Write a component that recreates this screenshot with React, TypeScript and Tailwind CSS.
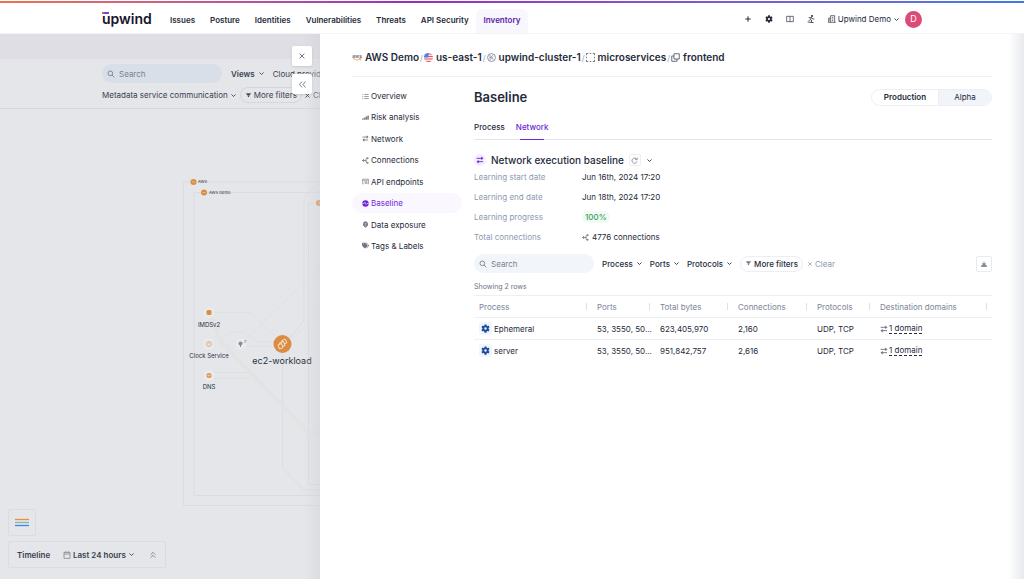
import React, { ReactNode } from "react";
import { FaTags } from "react-icons/fa";

const navItems = ["Issues", "Posture", "Identities", "Vulnerabilities", "Threats", "API Security"];

type IconProps = { className?: string };

function Stroke({ className = "size-2", children }: { className?: string; children: ReactNode }) {
  return (
    <svg viewBox="0 0 24 24" fill="none" stroke="currentColor" strokeWidth="2.4" className={`shrink-0 ${className}`} aria-hidden="true">
      {children}
    </svg>
  );
}

const Chevron = ({ className = "size-2" }: IconProps) => (
  <Stroke className={className}><path d="M5 8.500l7 7 7-7" strokeWidth="3" /></Stroke>
);
const Close = ({ className = "size-2" }: IconProps) => (
  <Stroke className={className}><path d="M5 5l14 14M19 5L5 19" strokeWidth="3" /></Stroke>
);
const Search = ({ className = "size-2" }: IconProps) => (
  <Stroke className={className}><circle cx="10" cy="10" r="7" /><path d="M15 15l7 7" /></Stroke>
);
const Funnel = ({ className = "size-2" }: IconProps) => (
  <Stroke className={className}><path d="M4 5h16l-4 5H8zM9 12h6l-2 5h-2z" fill="currentColor" strokeWidth="1" /></Stroke>
);
const Gear = ({ className = "size-2" }: IconProps) => (
  <Stroke className={className}>
    <path d="M12 1v5M12 18v5M2.500 6.500l4.300 2.500M17.200 15l4.300 2.500M2.500 17.500l4.300-2.500M17.200 9l4.300-2.500" strokeWidth="5.500" />
    <circle cx="12" cy="12" r="5.800" strokeWidth="5" />
  </Stroke>
);
const Swap = ({ className = "size-2" }: IconProps) => (
  <Stroke className={className}><path d="M2 7h17M3 17h18" strokeWidth="2.8" /><path d="M16 2l6 5-6 5zM8 12l-6 5 6 5z" fill="currentColor" strokeWidth="0.5" /></Stroke>
);
const Fork = ({ className = "size-2" }: IconProps) => (
  <Stroke className={className}><path d="M1 12h13M7 7l-5 5 5 5M20 4h-3q-3 0-3 3v10q0 3 3 3h3" strokeWidth="2.8" /><path d="M18 1l5 3-5 3zM18 17l5 3-5 3z" fill="currentColor" strokeWidth="1" /></Stroke>
);
const Boxes = ({ className = "size-2" }: IconProps) => (
  <Stroke className={className}><path d="M8 2h14v14H8zM8 8H2v14h14v-6" /></Stroke>
);
const Overview = () => (
  <Stroke><path d="M1 5h3M8 5h15M1 12h3M8 12h15M1 19h3M8 19h15" /></Stroke>
);
const Risk = () => (
  <Stroke><path d="M1 19v-3h4v3zM7 19v-6h4v6zM13 19V9h4v10zM19 19V6h4v13z" fill="currentColor" strokeWidth="1" /></Stroke>
);
const Endpoint = () => (
  <Stroke><path d="M6 20H2V4h20v16h-2M2 8h20" strokeWidth="2" /><path d="M9 13h8v7M17 20l-6-6M9 13l3 7" strokeWidth="2" /></Stroke>
);
const Baseline = () => (
  <Stroke><circle cx="12" cy="12" r="11" fill="currentColor" stroke="none" /><path d="M1 12h6l3-4 4 7 3-3h6" stroke="#faf7ff" strokeWidth="2" /></Stroke>
);
const Exposure = () => (
  <Stroke><path d="M12 1a10 10 0 00-5 18l5 4 5-4a10 10 0 00-5-18z" fill="currentColor" stroke="none" /><path d="M4 9h16M5 14h14M12 4v16" stroke="#fff" strokeWidth="0.8" /></Stroke>
);

const menu: { label: string; icon: ReactNode }[] = [
  { label: "Overview", icon: <Overview /> },
  { label: "Risk analysis", icon: <Risk /> },
  { label: "Network", icon: <Swap /> },
  { label: "Connections", icon: <Fork /> },
  { label: "API endpoints", icon: <Endpoint /> },
  { label: "Baseline", icon: <Baseline /> },
  { label: "Data exposure", icon: <Exposure /> },
  { label: "Tags & Labels", icon: <FaTags /> },
];

const columns = [
  { label: "Process", width: "" },
  { label: "Ports", width: "w-[63px]" },
  { label: "Total bytes", width: "w-[78px]" },
  { label: "Connections", width: "w-[79px]" },
  { label: "Protocols", width: "w-[63px]" },
  { label: "Destination domains", width: "w-[117px]" },
];

const rows = [
  { process: "Ephemeral", bytes: "623,405,970", connections: "2,160" },
  { process: "server", bytes: "951,842,757", connections: "2,616" },
];

function Logo() {
  return (
    <a href="#home" aria-label="upwind" className="flex w-12 flex-col text-[14px] leading-[14px] font-semibold text-[#17142b]">
      <span className="h-[2px] w-[7px] bg-linear-to-r from-[#f0605a] via-[#7a35d8] to-[#4a5cf0]" />
      <span className="-mt-[2px]">upwind</span>
    </a>
  );
}

function Header() {
  return (
    <header className="flex h-[34px] shrink-0 flex-col border-b border-[#f3f3f6] bg-white pt-px">
      <div className="h-[2px] shrink-0 bg-linear-to-r from-[#f0704a] via-[#9a2bc0] via-40% to-[#3f7ae8]" />
      <div className="flex flex-1 items-stretch pr-[102px] pl-[102px]">
        <div className="flex items-center pt-[2px]"><Logo /></div>
        <nav className="flex flex-1 items-stretch gap-[15px] pl-5 text-[8px] font-semibold text-[#262b3b]">
          {navItems.map((n) => (
            <a key={n} href="#nav" className="flex items-center pt-1 whitespace-nowrap">{n}</a>
          ))}
          <a href="#inventory" className="-ml-2 mt-[6px] flex items-center rounded-t-md bg-[#f9f7fe] px-2 pb-[2px] text-[#5b21a6]">
            Inventory
          </a>
        </nav>
        <div className="flex items-center gap-[13px] pt-[2px] text-[#262b3b]">
          <button aria-label="Add"><Stroke className="size-2"><path d="M12 4v16M4 12h16" strokeWidth="3" /></Stroke></button>
          <button aria-label="Settings"><Gear className="size-2" /></button>
          <button aria-label="Docs"><Stroke className="size-2"><path d="M2 4h20v16H2zM12 4v16" strokeWidth="2" /></Stroke></button>
          <button aria-label="What's new">
            <Stroke className="size-2"><circle cx="15" cy="3" r="2" fill="currentColor" /><path d="M5 8h8l5 4h4M13 8l-3 6 5 3-3 5M9 14l-4 4M2 21l18 2" /></Stroke>
          </button>
          <button className="flex items-center gap-[2px] text-[8px] whitespace-nowrap">
            <Stroke className="size-2"><path d="M2 22V9h6M8 22V2h12v20M1 22h22M12 7h4M12 12h4M12 17h4M4 13h2M4 17h2" strokeWidth="2" /></Stroke>
            Upwind Demo
            <Chevron className="size-[7px]" />
          </button>
          <span className="-ml-2 flex size-[17px] items-center justify-center rounded-full bg-[#dc4a78] text-[9px] text-white">D</span>
        </div>
      </div>
    </header>
  );
}

function Graph() {
  return (
    <div className="relative flex-1 overflow-hidden">
      <svg width="320" height="470" viewBox="0 109 320 470" fill="none" className="absolute top-0 left-0" aria-hidden="true">
        <g stroke="#dadce0">
          <path d="M330 182H183.500V505.500H330M330 192.500H194V495.500H330M330 203H308.500V484.500H330" />
          <path d="M209 312.500H250L275 336M209 372.500H250M209 378.500H250M222 344C224 330 232 332 244 332L258 342H275M244 346H275" stroke="#dfe0e1" />
          <path d="M330 172L304 198V320L290 338M282.500 352V468L304 490H330" stroke="#dadde5" />
          <path d="M247 338L330 257M294 337L330 300" stroke="#dfe1e1" />
        </g>
        <path d="M210 316C217 330 219 342 225 346L306 430Q312 436 325 436" stroke="#e2e4e3" strokeWidth="4" />
        <g fill="#eaebed"><circle cx="209" cy="312.500" r="5.500" /><circle cx="209" cy="344" r="5.500" /><circle cx="209" cy="375.500" r="5.500" /><circle cx="241" cy="344" r="5.500" /></g>
        <g fill="#dc8c42">
          <circle cx="193.500" cy="182" r="3" /><circle cx="204" cy="192.500" r="3" /><circle cx="319" cy="203" r="3" />
          <rect x="206.500" y="310" width="5" height="5" rx="1.500" /><circle cx="209" cy="375.500" r="2.500" /><circle cx="282.500" cy="344" r="9" />
        </g>
        <g stroke="#f1cfa8" strokeWidth=".7"><path d="M192 182h3M202.500 192.500h3M318 203h3M207 375.500h4M209 373.500v4" /></g>
        <circle cx="209" cy="344" r="2.500" stroke="#dfa169" strokeWidth=".8" /><path d="M209 342.500v2" stroke="#dfa169" strokeWidth=".8" />
        <circle cx="240.500" cy="343.500" r="2" fill="#858b97" /><path d="M240.500 345v2" stroke="#858b97" />
        <g stroke="#fbeedd" strokeWidth=".9" fill="#dc8c42"><path d="M281.500 341l3.500-2 2 3.500-3.500 2z" /><path d="M279.500 343l4-1.500 1.500 4-4 1.500z" /><path d="M278 345l3.500-1.500 1.500 4-3.500 1.500z" /></g>
      </svg>
      <div className="text-[#2b3140]">
        <span className="absolute top-[70px] left-[198px] text-[4px] leading-[6px]">AWS</span>
        <span className="absolute top-[81px] left-[209px] text-[4px] leading-[6px]">AWS Demo</span>
        <span className="absolute top-[212px] left-[209px] -translate-x-1/2 text-[6px] leading-2">IMDSv2</span>
        <span className="absolute top-[243px] left-[209px] -translate-x-1/2 text-[6px] leading-2 whitespace-nowrap">Clock Service</span>
        <span className="absolute top-[274px] left-[209px] -translate-x-1/2 text-[6px] leading-2">DNS</span>
        <span className="absolute top-[230px] left-[244px] text-[4px] leading-[6px]">7</span>
        <span className="absolute top-[247px] left-[282px] -translate-x-1/2 text-[9px] leading-[10px] whitespace-nowrap">ec2-workload</span>
      </div>
      <div className="absolute bottom-[11px] left-2 flex flex-col items-start gap-[5px] text-[8px] font-semibold text-[#3a4150]">
        <button aria-label="Legend" className="flex h-[27px] w-7 items-center justify-center rounded-xs border border-[#dadce0]">
          <svg viewBox="0 0 14 9" className="h-[9px] w-[14px]" strokeWidth="1.300" fill="none" aria-hidden="true">
            <path d="M0 1.500h14" stroke="#f08a3c" />
            <path d="M0 4.500h14" stroke="#74c2a4" />
            <path d="M0 7.500h14" stroke="#3f82f5" />
          </svg>
        </button>
        <div className="flex h-[27px] items-center rounded-xs border border-[#dadce0] px-2">
          <span className="w-[46px]">Timeline</span>
          <button className="flex items-center gap-[2px] whitespace-nowrap">
            <Stroke className="size-2 text-[#6c7382]"><path d="M3 4h18v18H3zM3 9h18M8 1v4M16 1v4" strokeWidth="2" /></Stroke>
            Last 24 hours
            <Chevron className="size-[7px]" />
          </button>
          <button aria-label="Expand timeline" className="ml-[14px] text-[#6c7382]">
            <Stroke><path d="M5 11l7-7 7 7M5 20l7-7 7 7" /></Stroke>
          </button>
        </div>
      </div>
    </div>
  );
}

function Backdrop() {
  return (
    <section className="relative flex w-80 shrink-0 flex-col bg-[#e4e6e9] text-[8px] text-[#3a4150]">
      <div className="h-[25px] bg-[#dfdee4]" />
      <div className="flex h-[50px] flex-col justify-between overflow-hidden border-b border-[#d5d7db] pt-[5px] pb-[5px] pl-[102px]">
        <div className="flex items-center whitespace-nowrap">
          <label className="flex h-[19px] w-[120px] shrink-0 items-center gap-1 rounded-full bg-[#d9dfe8] px-[5px] text-[#6c7382]">
            <Search />
            <input aria-label="Search inventory" placeholder="Search" className="w-full min-w-0 bg-transparent outline-none placeholder:text-[#7b8290]" />
          </label>
          <button className="ml-[9px] flex items-center gap-[3px] font-semibold">Views <Chevron className="size-[7px]" /></button>
          <button className="ml-2">Cloud provider</button>
        </div>
        <div className="flex items-center whitespace-nowrap">
          <button className="flex items-center gap-[2px]">Metadata service communication <Chevron className="size-[7px]" /></button>
          <button className="ml-[3px] flex h-4 items-center gap-[2px] rounded-full border border-[#d3d6da] px-1"><Funnel className="size-[7px]" />More filters</button>
          <button className="ml-[2px] flex items-center gap-[2px]"><Close className="size-[7px]" />Clear</button>
        </div>
      </div>
      <Graph />
      <div className="absolute inset-y-0 right-0 w-4 bg-linear-to-r from-transparent to-[#d0d2d9]/50" />
      <div className="absolute top-3 right-2 flex flex-col gap-2 text-[#6c7382]">
        <button aria-label="Close panel" className="flex size-5 items-center justify-center rounded-xs bg-white shadow-sm"><Close /></button>
        <button aria-label="Expand panel" className="flex size-5 items-center justify-center rounded-xs bg-white shadow-sm">
          <Stroke className="size-[9px]"><path d="M11 4l-7 8 7 8M20 4l-7 8 7 8" /></Stroke>
        </button>
      </div>
    </section>
  );
}

function Breadcrumbs() {
  const slash = <span className="px-px text-[8px] font-normal text-[#9aa1af]">/</span>;
  return (
    <nav aria-label="Breadcrumb" className="flex h-[43px] items-center border-b border-[#eff0f3] pt-[5px] text-[10px] font-semibold whitespace-nowrap text-[#262b3b]">
      <a href="#aws" className="flex items-center gap-[3px]">
        <span className="flex w-[10px] flex-col items-center text-[5px] leading-[4px] font-medium text-[#555c6b]">
          aws
          <svg viewBox="0 0 20 6" className="h-[3px] w-[10px]" fill="none" aria-hidden="true"><path d="M2 1q8 6 15 1M14 1h4l-1 4" stroke="#f0a04b" strokeWidth="1.600" /></svg>
        </span>
        AWS Demo
      </a>
      {slash}
      <a href="#region" className="flex items-center gap-[3px]">
        <svg viewBox="0 0 18 18" className="size-[9px]" aria-hidden="true">
          <clipPath id="flag"><circle cx="9" cy="9" r="9" /></clipPath>
          <g clipPath="url(#flag)"><path fill="#fbe9ec" d="M0 0h18v18H0z" /><path stroke="#e8505b" strokeWidth="2.400" d="M0 2h18M0 7h18M0 12h18M0 17h18" /><path fill="#4d82e0" d="M0 0h9v9H0z" /></g>
        </svg>
        us-east-1
      </a>
      {slash}
      <a href="#cluster" className="flex items-center gap-[3px]">
        <Stroke className="size-[9px] text-[#6c7382]"><circle cx="12" cy="12" r="10.500" strokeWidth="2" /><path d="M8 5v14M8 13l8-7M10 11l7 7M16 10l-4 5" strokeWidth="1.800" /></Stroke>
        upwind-cluster-1
      </a>
      {slash}
      <a href="#namespace" className="flex items-center gap-[3px]">
        <Stroke className="size-[9px] text-[#555c6b]"><path d="M1 6V1h5M10 1h4M18 1h5v5M23 10v4M23 18v5h-5M14 23h-4M6 23H1v-5M1 14v-4" /></Stroke>
        microservices
      </a>
      {slash}
      <a href="#frontend" className="flex items-center gap-[3px]">
        <Boxes className="size-[9px] text-[#555c6b]" />
        frontend
      </a>
    </nav>
  );
}

function Detail({ label, children }: { label: string; children: ReactNode }) {
  return (
    <div className="flex h-5 items-center">
      <dt className="w-[108px] text-[#8e99af]">{label}</dt>
      <dd className="flex items-center gap-[3px] text-[#262b3b]">{children}</dd>
    </div>
  );
}

function BaselinePanel() {
  return (
    <main className="min-w-0 flex-1 text-[8px] text-[#262b3b]">
      <div className="flex h-10 items-center justify-between">
        <h1 className="pt-px text-[13px] font-semibold">Baseline</h1>
        <div className="flex h-[17px] overflow-hidden rounded-full border border-[#eceef3]">
          <button className="w-[66px] font-semibold">Production</button>
          <button className="w-[53px] border-l border-[#eceef3] bg-[#f1f4f9]">Alpha</button>
        </div>
      </div>
      <div role="tablist" className="flex h-[23px] gap-[11px] border-b border-[#e4e4ef] font-medium">
        <button role="tab" aria-selected="false" className="flex h-6 items-start pt-1">Process</button>
        <button role="tab" aria-selected="true" className="flex h-[23px] flex-col items-center justify-between pt-1 text-[#6d28d9]">
          Network
          <span className="h-px w-6 shrink-0 bg-[#6d28d9]" />
        </button>
      </div>
      <div className="flex h-[27px] items-end gap-[5px] pb-px">
        <span className="flex size-3 items-center justify-center rounded-full bg-[#f3edfd] text-[#6d28d9]"><Swap /></span>
        <h2 className="text-[10px] leading-3 font-medium">Network execution baseline</h2>
        <button aria-label="Refresh" className="flex size-3 items-center justify-center rounded-xs border border-[#eceef3] text-[#6c7382]">
          <Stroke className="size-[7px]"><path d="M20 8a9 9 0 10 1 7M21 2v7h-7" /></Stroke>
        </button>
        <button aria-label="Collapse section" className="flex h-3 items-center"><Chevron className="size-[7px]" /></button>
      </div>
      <dl>
        <Detail label="Learning start date">Jun 16th, 2024 17:20</Detail>
        <Detail label="Learning end date">Jun 18th, 2024 17:20</Detail>
        <Detail label="Learning progress"><span className="rounded-full bg-[#f0fbf4] px-[3px] font-medium text-[#3a9e5c]">100%</span></Detail>
        <Detail label="Total connections"><Fork className="size-[7px] text-[#6c7382]" />4776 connections</Detail>
      </dl>
      <div className="mt-[7px] flex items-center font-medium">
        <label className="flex h-[19px] w-[120px] shrink-0 items-center gap-1 rounded-full bg-[#f2f5fa] px-[5px] text-[#6c7382]">
          <Search />
          <input aria-label="Search processes" placeholder="Search" className="w-full min-w-0 bg-transparent font-normal outline-none placeholder:text-[#7b8290]" />
        </label>
        <div className="flex flex-1 items-center gap-[7px] pl-2">
          {["Process", "Ports", "Protocols"].map((f) => (
            <button key={f} className="flex items-center gap-[3px]">{f}<Chevron className="size-[7px]" /></button>
          ))}
          <button className="flex h-4 items-center gap-[2px] rounded-full border border-[#eceef3] px-1"><Funnel className="size-[7px] text-[#6c7382]" />More filters</button>
          <button className="-ml-[3px] flex items-center gap-[2px] font-normal text-[#8e99af]"><Close className="size-[6px]" />Clear</button>
        </div>
        <button aria-label="Download" className="flex size-4 items-center justify-center rounded-xs border border-[#e8eaef] text-[#6c7382]">
          <Stroke className="size-[6px]"><path d="M12 2v10M5 11l7 6 7-6zM2 18h20v4H2z" fill="currentColor" /></Stroke>
        </button>
      </div>
      <p className="pt-[9px] pb-[3px] text-[7px] leading-[10px] text-[#6c7382]">Showing 2 rows</p>
      <table className="w-full table-fixed border-collapse text-left">
        <thead>
          <tr className="h-[22px] border-t border-b border-[#edeff2] text-[#7b8498]">
            {columns.map((c) => (
              <th key={c.label} scope="col" className={`px-[5px] font-normal ${c.width}`}>
                <span className="flex items-center justify-between whitespace-nowrap">{c.label}<span className="h-[7px] w-px bg-[#dde0e6]" /></span>
              </th>
            ))}
          </tr>
        </thead>
        <tbody>
          {rows.map((r) => (
            <tr key={r.process} className="h-[22px] border-b border-[#edeff2] last:border-0">
              <td className="px-[5px]">
                <span className="flex items-center gap-[2px]">
                  <span className="flex size-[13px] items-center justify-center rounded-xs bg-[#f1f5fc]"><Gear className="size-[9px] text-[#1e4a9c]" /></span>
                  {r.process}
                </span>
              </td>
              <td className="px-[5px] whitespace-nowrap">53, 3550, 50...</td>
              <td className="px-[5px]">{r.bytes}</td>
              <td className="px-[5px]">{r.connections}</td>
              <td className="px-[5px] whitespace-nowrap">UDP, TCP</td>
              <td className="px-[5px]">
                <span className="flex items-center gap-px">
                  <Swap className="size-2 text-[#6c7382]" />
                  <a href="#domains" className="border-b border-dashed border-[#262b3b] leading-[10px]">1 domain</a>
                </span>
              </td>
            </tr>
          ))}
        </tbody>
      </table>
    </main>
  );
}

export default function App() {
  return (
    <div className="flex min-h-screen flex-col bg-white font-['Inter',sans-serif]">
      <Header />
      <div className="flex flex-1">
        <Backdrop />
        <div className="relative min-w-0 flex-1 px-8">
          <Breadcrumbs />
          <div className="flex items-start gap-3">
            <aside className="w-[110px] shrink-0 pt-[9px]">
              <ul className="flex h-[170px] flex-col justify-between text-[8px] text-[#262b3b]">
                {menu.map((m) => (
                  <li key={m.label}>
                    <a
                      href="#section"
                      className={`flex h-5 items-center gap-[2px] rounded-full pl-[10px] ${m.label === "Baseline" ? "bg-[#faf7ff] text-[#6d28d9]" : ""}`}
                    >
                      <span className={`[&>svg]:size-[7px] ${m.label === "Baseline" ? "" : "text-[#6c7382]"}`}>{m.icon}</span>
                      {m.label}
                    </a>
                  </li>
                ))}
              </ul>
            </aside>
            <BaselinePanel />
          </div>
          <div className="absolute inset-y-0 right-0 w-4 bg-linear-to-r from-transparent to-[#e9eaed]" />
        </div>
      </div>
    </div>
  );
}
